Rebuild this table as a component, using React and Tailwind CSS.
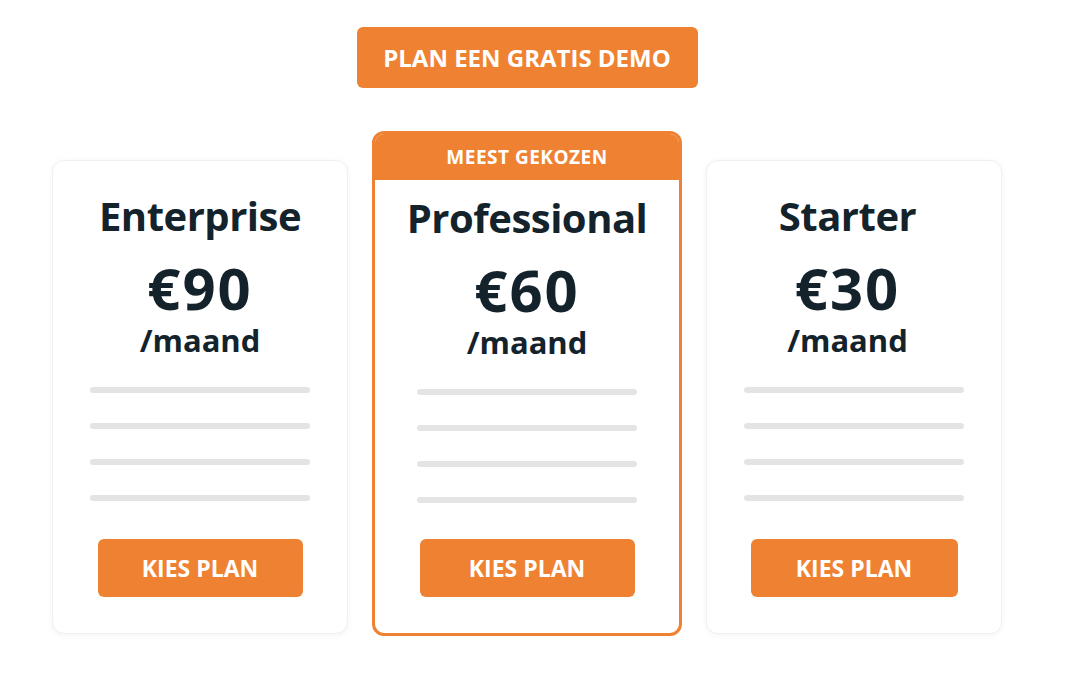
import React from 'react';

const plans = [
  { name: 'Enterprise', price: '€90' },
  { name: 'Professional', price: '€60', featured: true },
  { name: 'Starter', price: '€30', shift: true },
];

const font = { fontFamily: '"Open Sans", "Liberation Sans", sans-serif' };

const FeatureLines = () => (
  <div className="flex w-[220px] flex-col gap-[30px]">
    {[0, 1, 2, 3].map((i) => (
      <div key={i} className="h-[6px] w-full rounded-full bg-[#e4e4e4]" />
    ))}
  </div>
);

const PlanBody = ({ name, price, featured, shift }) => (
  <div className="flex flex-col items-center">
    <div className={`flex flex-col items-center text-[#14232b] ${shift ? 'pr-[13px]' : ''}`}>
      <h2 className={`text-[40px] font-bold leading-[48px] tracking-[-0.5px] ${featured ? 'mt-[14px]' : 'mt-[31px]'}`}>
        {name}
      </h2>
      <div className="mt-[20px] text-[58px] font-bold leading-[56px] tracking-[2px]">{price}</div>
      <div className="mt-[6px] text-[31px] font-bold leading-[36px]">/maand</div>
    </div>
    <div className="mt-[29px]">
      <FeatureLines />
    </div>
  </div>
);

const PlanCard = ({ name, price, featured, shift }) => {
  if (featured) {
    return (
      <div className="flex h-[505px] w-[310px] flex-col overflow-hidden rounded-[12px] border-[3px] border-[#ef8232] bg-white">
        <div className="flex h-[46px] items-center justify-center bg-[#ef8232] text-[19px] font-bold tracking-[0.5px] text-white">
          MEEST GEKOZEN
        </div>
        <PlanBody name={name} price={price} featured />
        <button className="mx-auto mt-[36px] h-[58px] w-[215px] rounded-[6px] bg-[#ef8232] text-[23px] font-bold text-white">
          KIES PLAN
        </button>
      </div>
    );
  }
  return (
    <div className="mt-[29px] flex h-[474px] w-[296px] flex-col rounded-[12px] border border-[#f0f0f0] bg-white shadow-[0_1px_6px_rgba(0,0,0,0.05)]">
      <PlanBody name={name} price={price} shift={shift} />
      <button className={`mx-auto mt-[38px] h-[58px] rounded-[6px] bg-[#ef8232] text-[23px] font-bold text-white ${shift ? 'w-[207px]' : 'w-[205px]'}`}>
        KIES PLAN
      </button>
    </div>
  );
};

export default function App() {
  return (
    <div className="h-[678px] w-[1080px] overflow-hidden bg-white" style={font}>
      <div className="box-content flex w-[950px] flex-col items-center pl-[52px]">
        <button className="mt-[27px] h-[61px] w-[341px] rounded-[6px] bg-[#ef8232] text-[24px] font-bold text-white">
          PLAN EEN GRATIS DEMO
        </button>
        <div className="mt-[43px] flex items-start gap-[24px]">
          {plans.map((p) => (
            <PlanCard key={p.name} {...p} />
          ))}
        </div>
      </div>
    </div>
  );
}
